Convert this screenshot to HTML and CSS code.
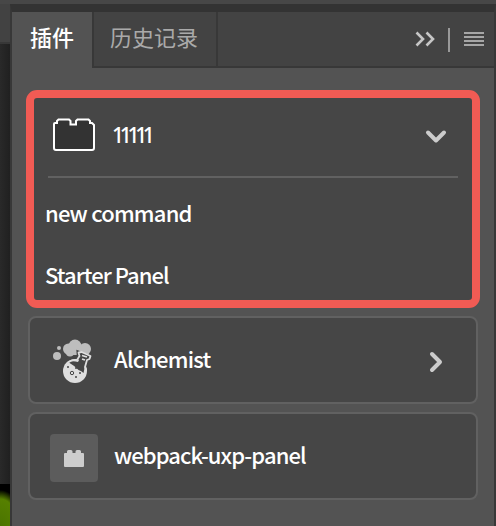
FILE: index.html
```html
<!DOCTYPE html>
<html lang="zh-CN">
<head>
<meta charset="utf-8">
<title>插件</title>
<link rel="stylesheet" href="styles.css">
</head>
<body>
<div class="topbar"></div>
<div class="workspace">
  <div class="canvas"><div class="ruler"></div><div class="dark"></div><div class="photo"></div></div>
  <section class="panel">
    <header class="tabs">
      <div class="tab active">插件</div>
      <div class="tab history">历史记录</div>
      <div class="tools">
        <svg class="collapse" width="20" height="16" viewBox="0 0 20 16"><path d="M1.500 1.500L8 8l-6.500 6.500M11.500 1.500L18 8l-6.500 6.500"/></svg>
        <span class="divider"></span>
        <svg class="menu" width="20" height="14" viewBox="0 0 20 14"><path d="M0 1h20M0 5h20M0 9h20M0 13h20"/></svg>
      </div>
    </header>
    <main class="list">
      <article class="plugin expanded">
        <div class="head">
          <svg class="brick" width="44" height="34" viewBox="0 0 44 34"><path d="M2 6Q2 5 3 5H5V3L6.500 1.500H17L18.500 3V6.500H24V3L25.500 1.500H36.500L38 3V5H40L42 7V30Q42 32 40 32H4Q2 32 2 30Z"/></svg>
          <span class="name ones">11111</span>
          <svg class="chevron" width="24" height="24" viewBox="0 0 24 24"><path d="M4 8.500l8 8 8-8"/></svg>
        </div>
        <div class="command new">new command</div>
        <div class="command starter">Starter Panel</div>
      </article>
      <article class="plugin">
        <svg class="flask" width="48" height="48" viewBox="0 0 48 48">
          <g class="smoke"><circle cx="7" cy="19" r="4"/><circle cx="9" cy="11" r="2"/><circle cx="18.500" cy="12" r="5.500"/><circle cx="25" cy="9" r="6.500"/><circle cx="35" cy="12" r="6"/><circle cx="20" cy="15.500" r="4"/><path d="M18 8h17v10H20z"/></g>
          <path class="halo" d="M28 15l12.500 5-2 4-2 1-3 9-11-7 6-5z"/>
          <circle class="glass" cx="25" cy="34" r="12"/>
          <path class="gap" d="M18 25q5-1.500 10 0l3-6 6 3-2 7-1.500 7q-2-2-5-3-5-5-10.500-8z"/>
          <path class="rim" d="M18 25.500q4-3 9-2.500l2.500-4-1-3.500 3-.5 9 4-1 3-2.500 1-2 7q1 2 1 4M32 18.500l5 1.500M32 22l3 1"/>
          <g class="gap"><circle cx="18" cy="30" r="1"/><circle cx="26" cy="31" r="1"/><circle cx="30" cy="36" r="1"/><circle cx="26" cy="40" r="1"/></g><circle class="bubble" cx="22" cy="36" r="1.700"/>
        </svg>
        <span class="name alchemist">Alchemist</span>
        <svg class="chevron" width="24" height="24" viewBox="0 0 24 24"><path d="M8 4l8 8-8 8"/></svg>
      </article>
      <article class="plugin">
        <div class="tile"><svg width="20" height="18" viewBox="0 0 20 18"><path d="M0 5q0-1 1-1h2V2.500q0-1.500 1.500-1.500h2.500q1.500 0 1.500 1.500V4h3V2.500q0-1.500 1.500-1.500h2.500q1.500 0 1.500 1.500V4h2q1 0 1 1v12q0 1-1 1H1q-1 0-1-1z"/></svg></div>
        <span class="name webpack">webpack-uxp-panel</span>
      </article>
    </main>
  </section>
</div>
</body>
</html>
```

FILE: styles.css
```css
* { box-sizing: border-box; }
body {
  margin: 0;
  width: 496px;
  height: 526px;
  overflow: hidden;
  background: #383838;
  color: #fff;
  font-family: "Noto Sans CJK SC", sans-serif;
}
svg { display: block; flex: none; fill: none; }
.topbar { height: 4px; background: #474747; }
.workspace { display: flex; height: 522px; }
.canvas { display: flex; flex-direction: column; width: 10px; background: #424242; }
.ruler { height: 40px; border-bottom: 2px solid #373737; }
.dark { height: 440px; background: linear-gradient(90deg, #292929, #202020); }
.photo { flex: 1; background: radial-gradient(ellipse 24px 36px at 0 42px, #4b7400 0, #568000 75%, #000 100%); }
.panel {
  width: 486px;
  border: solid #383838;
  border-top-color: #333;
  border-width: 8px 2px 0 2px;
  background: #535353;
}
.tabs { display: flex; height: 56px; background: #434343; }
.tab {
  height: 56px;
  border-right: 2px solid #383838;
  border-bottom: 2px solid #383838;
  font-size: 22px;
  line-height: 49px;
  white-space: nowrap;
}
.active { width: 82px; height: 56px; padding-left: 18px; background: #535353; border-bottom: 0; font-weight: 500; }
.history { width: 124px; padding-left: 16px; color: #aaa; }
.tools { display: flex; flex: 1; align-items: center; justify-content: flex-end; padding-right: 10px; border-bottom: 2px solid #383838; }
.collapse { stroke: #c6c6c6; stroke-width: 2.6; }
.divider { width: 2px; height: 24px; margin: 2px 14px 0 13px; background: #999; }
.menu { stroke: #a6a6a6; stroke-width: 2; }
.list { display: flex; flex-direction: column; gap: 8px; padding: 22px 16px 0 16px; }
.plugin {
  display: flex;
  align-items: center;
  height: 88px;
  padding-left: 20px;
  border: 2px solid #616161;
  border-radius: 8px;
  background: #464646;
}
.plugin.expanded {
  display: block;
  height: 218px;
  margin: 0 -2px;
  padding: 0 14px 0 12px;
  border: 8px solid #f15b54;
  border-radius: 11px;
}
.head { display: flex; align-items: center; height: 80px; padding-left: 4px; margin-left: 2px; border-bottom: 2px solid #616161; }
.brick { margin: -4px 16px 0 0; fill: #333; stroke: #fff; stroke-width: 2; }
.name { margin-top: -4px; font-size: 22px; line-height: 32px; font-weight: 500; white-space: nowrap; }
.ones { margin-top: -5px; font-family: "Noto Sans", sans-serif; font-size: 21px; letter-spacing: -4.3px; }
.alchemist { margin-left: 16px; letter-spacing: -0.8px; }
.webpack { margin-left: 16px; letter-spacing: -0.9px; }
.chevron { margin: 4px 28px 0 auto; stroke: #ccc; stroke-width: 4; stroke-linecap: round; stroke-linejoin: round; }
.head .chevron { margin: -3px 10px 0 auto; }
.command { height: 62px; margin-left: -1px; font-size: 22px; font-weight: 500; line-height: 68px; white-space: nowrap; }
.new { letter-spacing: -0.8px; }
.starter { letter-spacing: -0.95px; }
.flask { margin-top: 2px; }
.smoke { fill: #bdbdbd; }
.glass { fill: #dedede; }
.halo { stroke: #464646; stroke-width: 3; fill: #464646; }
.gap { fill: #464646; }
.rim { stroke: #dedede; stroke-width: 1.8; stroke-linejoin: round; }
.bubble { stroke: #464646; stroke-width: 1; }
.tile { display: flex; align-items: center; justify-content: center; width: 48px; height: 48px; margin-top: 4px; border-radius: 4px; background: #5c5c5c; }
.tile svg { fill: #cdcdcd; }
```
